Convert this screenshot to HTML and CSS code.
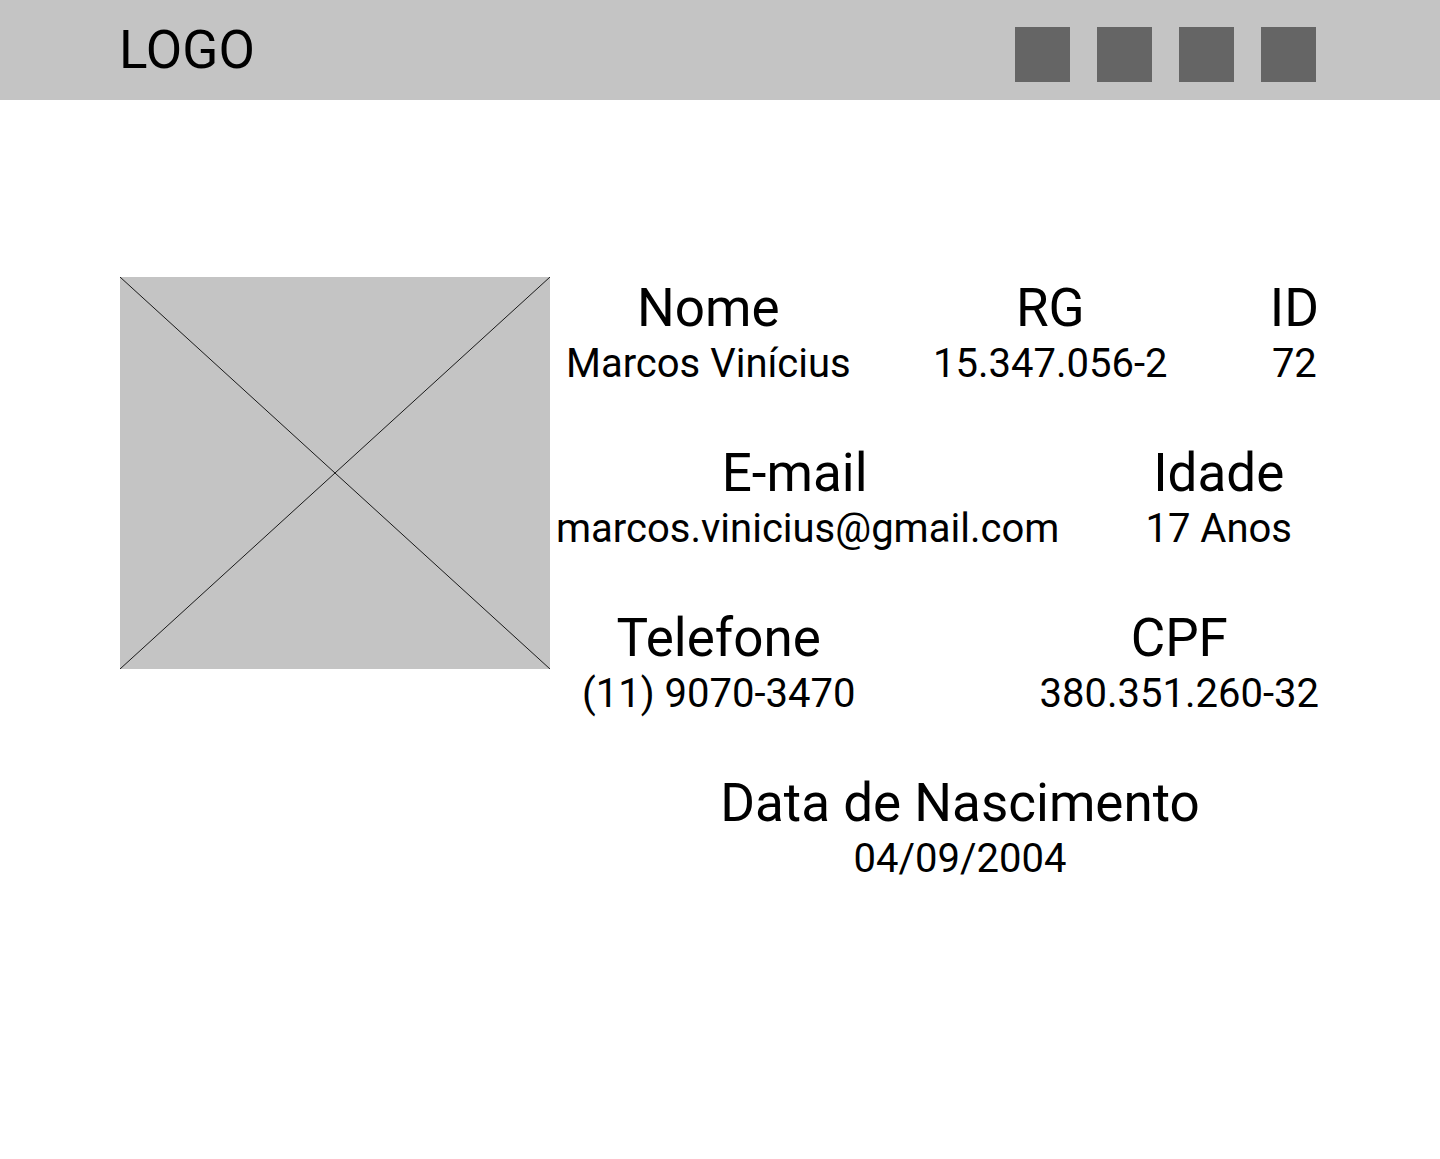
FILE: index.html
```html
<!DOCTYPE html>
<html lang="pt-BR">
<head>
    <meta charset="UTF-8">
    <meta name="viewport" content="width=device-width, initial-scale=1.0">
    <title>Perfil do Aluno</title>
    <link rel="stylesheet" href="styles.css">
</head>
<body>
    <header class="topbar">
        <div class="logo">LOGO</div>
        <nav class="menu">
            <span class="menu-item"></span>
            <span class="menu-item"></span>
            <span class="menu-item"></span>
            <span class="menu-item"></span>
        </nav>
    </header>

    <main class="profile">
        <div class="photo">
            <svg viewBox="0 0 430 392" preserveAspectRatio="none">
                <line x1="0" y1="0" x2="430" y2="392" />
                <line x1="430" y1="0" x2="0" y2="392" />
            </svg>
        </div>

        <div class="info">
            <div class="info-row row-1">
                <div class="field">
                    <div class="label">Nome</div>
                    <div class="value">Marcos Vinícius</div>
                </div>
                <div class="field field-rg">
                    <div class="label">RG</div>
                    <div class="value">15.347.056-2</div>
                </div>
                <div class="field">
                    <div class="label">ID</div>
                    <div class="value">72</div>
                </div>
            </div>

            <div class="info-row row-2">
                <div class="field">
                    <div class="label label-email">E-mail</div>
                    <div class="value">marcos.vinicius@gmail.com</div>
                </div>
                <div class="field">
                    <div class="label">Idade</div>
                    <div class="value">17 Anos</div>
                </div>
            </div>

            <div class="info-row row-3">
                <div class="field">
                    <div class="label">Telefone</div>
                    <div class="value">(11) 9070-3470</div>
                </div>
                <div class="field">
                    <div class="label">CPF</div>
                    <div class="value">380.351.260-32</div>
                </div>
            </div>

            <div class="info-row row-4">
                <div class="field">
                    <div class="label">Data de Nascimento</div>
                    <div class="value">04/09/2004</div>
                </div>
            </div>
        </div>
    </main>
</body>
</html>
```

FILE: styles.css
```css
body {
    margin: 0;
    font-family: Roboto, "Liberation Sans", Arial, sans-serif;
    color: #000;
    background: #fff;
}

.topbar {
    height: 100px;
    background: #c4c4c4;
    display: flex;
    align-items: center;
    justify-content: space-between;
    padding: 0 124px 0 119px;
}
.logo {
    font-size: 53px;
    line-height: 62px;
}
.menu {
    display: flex;
    gap: 27px;
    margin-top: 9px;
}
.menu-item {
    width: 55px;
    height: 55px;
    background: #656565;
}

.profile {
    display: flex;
    padding: 177px 120px 0 120px;
}
.photo {
    width: 430px;
    height: 392px;
    flex-shrink: 0;
    background: #c4c4c4;
}
.photo svg {
    display: block;
    width: 100%;
    height: 100%;
}
.photo line {
    stroke: #1a1a1a;
    stroke-width: 1;
}

.info {
    flex: 1;
    display: flex;
    flex-direction: column;
    gap: 53px;
}
.info-row {
    display: flex;
    justify-content: space-between;
}
.row-1 { padding: 0 1px 0 16px; }
.row-2 { padding: 0 28px 0 6px; }
.row-3 { padding: 0 1px 0 32px; }
.row-4 {
    justify-content: center;
    padding-left: 50px;
}

.field {
    text-align: center;
    white-space: nowrap;
}
.field-rg {
    margin-right: 20px;
}
.label {
    font-size: 53px;
    line-height: 62px;
}
.label-email {
    padding-right: 26px;
}
.value {
    font-size: 40px;
    line-height: 50px;
}
```
